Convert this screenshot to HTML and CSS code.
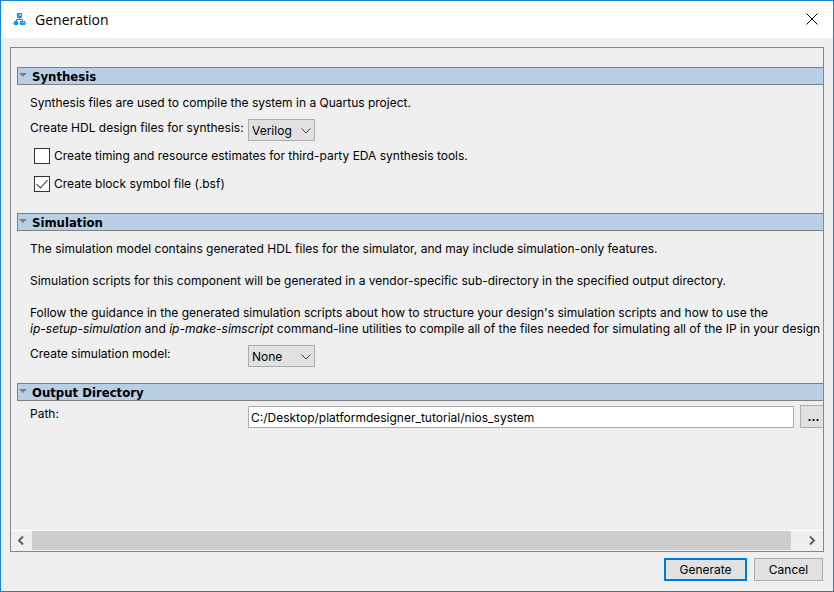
FILE: index.html
```html
<!DOCTYPE html>
<html lang="en">
<head>
<meta charset="utf-8">
<title>Generation</title>
<link rel="stylesheet" href="styles.css">
</head>
<body>
<main class="window">
  <header class="titlebar">
    <svg class="app-icon" viewBox="0 0 16 14" aria-hidden="true">
      <path class="base" d="M0 10.500h15"/>
      <path class="link" d="M7.500 5v2M4.500 9V6.500h6V9"/>
      <rect class="node" x="5" y="0" width="5" height="5"/>
      <rect class="node" x="2" y="8" width="4" height="4"/>
      <rect class="node" x="8" y="8" width="5" height="4"/>
      <rect class="glint" x="7" y="1" width="2" height="2"/>
      <rect class="glint" x="10" y="9" width="2" height="1"/>
    </svg>
    <h1 class="title">Generation</h1>
    <button class="close" type="button" aria-label="Close">
      <svg viewBox="0 0 12 12" aria-hidden="true"><path d="M0.500 0.500l11 11M11.500 0.500l-11 11"/></svg>
    </button>
  </header>

  <form class="body">
    <div class="panel">
      <div class="content">
        <section class="group">
          <h2 class="heading"><svg class="twisty" viewBox="0 0 8 4" aria-hidden="true"><path d="M0 0h8L4 4z"/></svg>Synthesis</h2>
          <div class="fields">
            <p class="text">Synthesis files are used to compile the system in a Quartus project.</p>
            <div class="row">
              <label class="label" for="hdl">Create HDL design files for synthesis:</label>
              <span class="dropdown">
                <select id="hdl"><option>Verilog</option><option>VHDL</option><option>None</option></select>
                <svg viewBox="0 0 10 6" aria-hidden="true"><path d="M0.500 0.500L5 5L9.500 0.500"/></svg>
              </span>
            </div>
            <label class="check"><input type="checkbox">Create timing and resource estimates for third-party EDA synthesis tools.</label>
            <label class="check"><input type="checkbox" checked>Create block symbol file (.bsf)</label>
          </div>
        </section>

        <section class="group">
          <h2 class="heading"><svg class="twisty" viewBox="0 0 8 4" aria-hidden="true"><path d="M0 0h8L4 4z"/></svg>Simulation</h2>
          <div class="fields">
            <p class="text">The simulation model contains generated HDL files for the simulator, and may include simulation-only features.</p>
            <p class="text">Simulation scripts for this component will be generated in a vendor-specific sub-directory in the specified output directory.</p>
            <p class="text">Follow the guidance in the generated simulation scripts about how to structure your design's simulation scripts and how to use the<br><em>ip-setup-simulation</em> and <em>ip-make-simscript</em> command-line utilities to compile all of the files needed for simulating all of the IP in your design</p>
            <div class="row">
              <label class="label" for="model">Create simulation model:</label>
              <span class="dropdown">
                <select id="model"><option>None</option><option>Verilog</option><option>VHDL</option></select>
                <svg viewBox="0 0 10 6" aria-hidden="true"><path d="M0.500 0.500L5 5L9.500 0.500"/></svg>
              </span>
            </div>
          </div>
        </section>

        <section class="group">
          <h2 class="heading"><svg class="twisty" viewBox="0 0 8 4" aria-hidden="true"><path d="M0 0h8L4 4z"/></svg>Output Directory</h2>
          <div class="fields path-fields">
            <div class="row">
              <label class="label" for="path">Path:</label>
              <input class="path" id="path" type="text" value="C:/Desktop/platformdesigner_tutorial/nios_system">
              <button class="browse" type="button" aria-label="Browse">...</button>
            </div>
          </div>
        </section>
      </div>

      <div class="scrollbar">
        <button class="arrow" type="button" aria-label="Scroll left"><svg viewBox="0 0 7 9" aria-hidden="true"><path d="M5 0.500L1 4.500L5 8.500"/></svg></button>
        <div class="track"><div class="thumb"></div></div>
        <button class="arrow" type="button" aria-label="Scroll right"><svg viewBox="0 0 7 9" aria-hidden="true"><path d="M1 0.500L5 4.500L1 8.500"/></svg></button>
      </div>
    </div>

    <footer class="actions">
      <button class="action primary" type="button">Generate</button>
      <button class="action" type="button">Cancel</button>
    </footer>
  </form>
</main>
</body>
</html>
```
FILE: styles.css
```css
* {
  box-sizing: border-box;
}

body {
  margin: 0;
  color: #000;
  font: 12px/16px Inter, "Noto Sans", sans-serif;
}

h1,
h2,
p {
  margin: 0;
}

button,
input,
select {
  margin: 0;
  color: inherit;
  font: inherit;
}

.window {
  display: flex;
  flex-direction: column;
  min-height: 100vh;
  border: 1px solid #1883d7;
  background: #efefef;
}

.titlebar {
  display: flex;
  align-items: center;
  height: 37px;
  padding: 0 15px 0 11px;
  background: #fff;
}

.app-icon {
  width: 16px;
  height: 14px;
}

.base {
  fill: none;
  stroke: #9fd4f5;
}

.link {
  fill: none;
  stroke: #4d7ea8;
}

.node {
  fill: #0c9bea;
}

.glint {
  fill: #8fd6fb;
}

.title {
  flex: 1;
  padding-left: 7px;
  font: 14px/20px "Open Sans", "Noto Sans", sans-serif;
}

.close {
  display: flex;
  padding: 0 0 2px;
  border: 0;
  background: none;
}

.close svg {
  width: 12px;
  height: 12px;
  fill: none;
  stroke: #000;
}

.body {
  display: flex;
  flex: 1;
  flex-direction: column;
  padding: 9px 9px 10px;
}

.panel {
  display: flex;
  flex: 1;
  flex-direction: column;
  border: 1px solid #828790;
}

.content {
  flex: 1;
  padding: 19px 0 0 6px;
  overflow: hidden;
  white-space: nowrap;
}

.group {
  margin-bottom: 16px;
}

.heading {
  display: flex;
  height: 18px;
  padding-left: 1px;
  border: 1px solid #808080;
  border-right: 0;
  background: #b8cfe5;
  font: bold 13px/17px "DejaVu Sans Condensed", "Liberation Sans", sans-serif;
}

.twisty {
  width: 8px;
  height: 4px;
  margin: 5px 5px 0 0;
  fill: #808080;
}

.fields {
  display: flex;
  flex-direction: column;
  padding: 10px 0 0 13px;
}

.text {
  margin-bottom: 16px;
}

.row {
  display: flex;
  align-items: flex-start;
}

.text + .row {
  margin-top: -8px;
}

.label {
  width: 218px;
  padding-top: 1px;
}

.dropdown {
  position: relative;
  display: flex;
}

.dropdown select {
  width: 67px;
  height: 22px;
  padding: 1px 3px 0;
  border: 1px solid #adadad;
  border-radius: 0;
  background: #e1e1e1;
  appearance: none;
}

.dropdown svg {
  position: absolute;
  top: 9px;
  right: 4px;
  width: 10px;
  height: 6px;
  fill: none;
  stroke: #404040;
  pointer-events: none;
}

.check {
  display: flex;
  align-items: center;
  gap: 4px;
  margin: 7px 0 5px 4px;
}

.check input {
  display: grid;
  place-items: center;
  width: 16px;
  height: 16px;
  border: 1px solid #333;
  background: #fff;
  appearance: none;
}

.check input:checked::after {
  width: 5px;
  height: 10px;
  margin-bottom: 3px;
  border: solid #333;
  border-width: 0 1px 1px 0;
  content: "";
  transform: rotate(42deg);
}

.path-fields {
  padding-top: 4px;
}

.path {
  flex: 1;
  min-width: 0;
  height: 22px;
  margin: 1px 6px 0 0;
  padding: 0 2px;
  border: 1px solid #abadb3;
  background: #fff;
}

.browse {
  width: 27px;
  height: 23px;
  margin-right: -4px;
  padding: 0;
  border: 1px solid #adadad;
  background: #e1e1e1;
  font-weight: 700;
}

.scrollbar {
  display: flex;
  height: 21px;
  padding-bottom: 1px;
  border-top: 1px solid #fff;
}

.arrow {
  display: grid;
  place-items: center;
  width: 21px;
  padding: 0;
  border: 0;
  background: none;
}

.arrow svg {
  width: 7px;
  height: 9px;
  fill: none;
  stroke: #606060;
  stroke-width: 2;
}

.track {
  flex: 1;
}

.thumb {
  width: calc(100% - 11px);
  height: 100%;
  background: #cdcdcd;
}

.actions {
  display: flex;
  justify-content: flex-end;
  gap: 7px;
  padding: 6px 1px 0 0;
}

.action {
  width: 69px;
  height: 23px;
  padding: 0;
  border: 1px solid #adadad;
  background: #e1e1e1;
}

.primary {
  width: 83px;
  border: 2px solid #0078d7;
}
```
